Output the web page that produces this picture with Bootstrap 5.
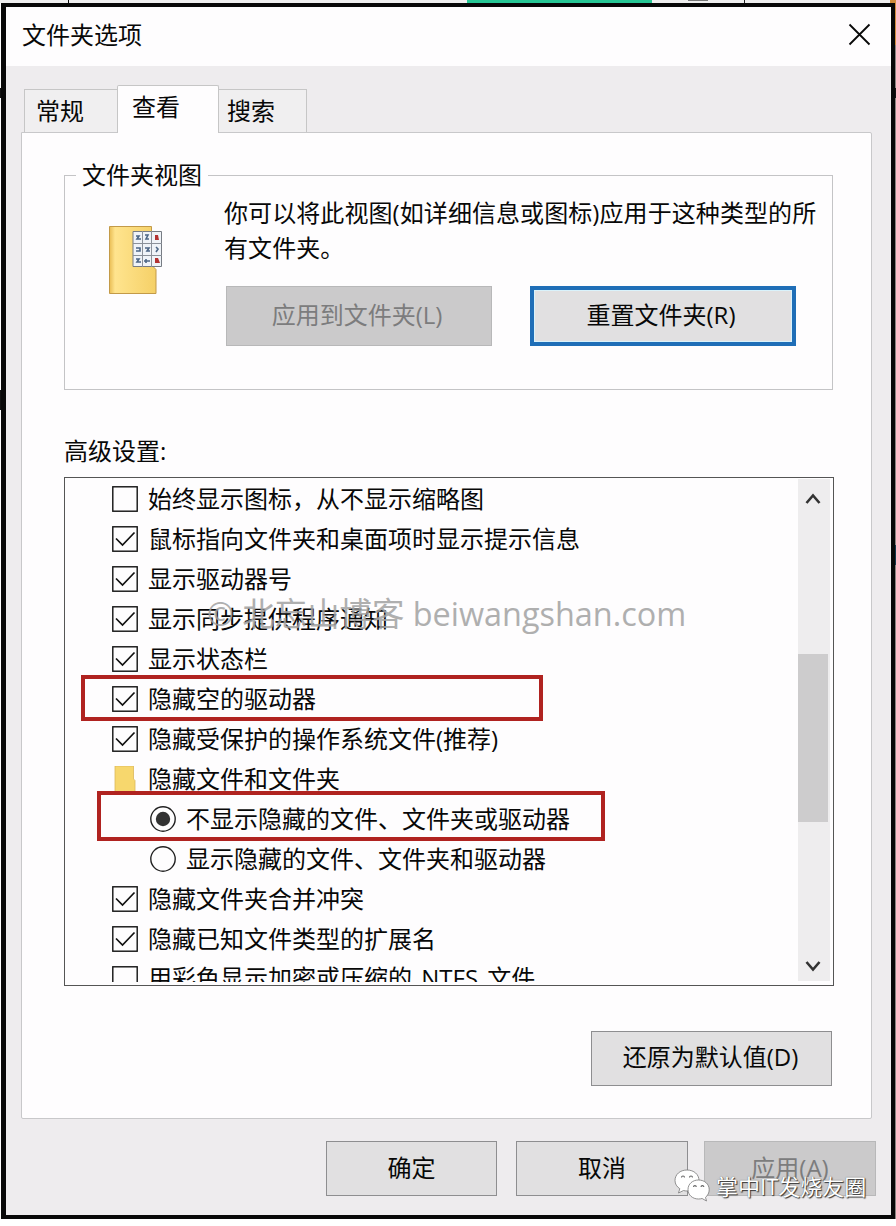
<!DOCTYPE html>
<html lang="zh-CN">
<head>
<meta charset="utf-8">
<title>文件夹选项</title>
<link href="https://cdn.jsdelivr.net/npm/bootstrap@5.3.0/dist/css/bootstrap.min.css" rel="stylesheet">
<style>
html,body{height:1226px;overflow:hidden}
body{background:#fff;color:#080808;font:24px/30px "Open Sans","Noto Sans CJK SC",sans-serif;font-weight:400}
.desk{width:896px;height:1226px;padding:3px 1px 0 1px;background:
 linear-gradient(#080808,#080808) 68px 0/1px 3px no-repeat,
 linear-gradient(#27c795,#27c795) 467px 0/185px 3px no-repeat,
 linear-gradient(#777,#777) 688px 0/20px 1px no-repeat,
 linear-gradient(#222,#222) 744px 0/1px 3px no-repeat,
 linear-gradient(#d08c3c,#d08c3c) 890px 0/6px 45px no-repeat,
 linear-gradient(#efefef,#efefef) 0 0/896px 3px no-repeat,
 linear-gradient(#111,#111) 0 88px/2px 10px no-repeat,
 linear-gradient(#111,#111) 0 390px/2px 20px no-repeat,
 linear-gradient(#111,#111) 894px 88px/2px 10px no-repeat,
 linear-gradient(#12384a,#12384a) 894px 545px/2px 20px no-repeat,
 linear-gradient(#8a8480,#8a8480) 895px 45px/1px 1174px no-repeat,
 #fff}
.win{width:894px;height:1216px;background:#eeecee;border:4px solid #080808;border-left-width:5px}
.titlebar{height:59px;background:#fefdfe;padding:0 20px 3px 16px}
.titlebar svg{margin-top:-2px}
.tabs{height:66px;padding:0 0 0 18px}
.tabs .nav-link{border:1px solid #c6c6c6;border-bottom:0;border-radius:0;color:#080808;height:43px;background:#f0eff0;padding:6px 0 0 11px;line-height:30px}
.tabs .t1{width:93px;border-right:0}.tabs .t3{width:88px;border-left:0;padding-left:8px}
.tabs .nav-link.active{width:102px;height:48px;margin-bottom:-1px;background:#fefdfe;border:1px solid #c6c6c6;border-bottom:0;border-radius:2px 2px 0 0;padding:6px 0 0 14px;color:#080808;z-index:1}
.panel{width:851px;height:987px;margin-left:15px;background:#fefdfe;border:1px solid #c8c8ca;border-radius:0 2px 2px 2px;padding:27px 38px 0 42px}
.group{height:230px;padding:0}
.group legend{font-size:24px;line-height:30px;width:auto;margin:0 0 0 12px;padding:0 6px;background:#fefdfe;float:none;position:relative;z-index:1}
.frame{border:1px solid #c4c4c6;height:215px;margin-top:-15px;padding:19px 0 0 44px}
.intro{line-height:35px;margin:0 0 21px;white-space:nowrap;letter-spacing:.08px}
.wbtn{border:1px solid #8e8e90;border-radius:0;background:#e1e0e1;color:#080808;font-size:24px;line-height:30px;padding:0 2px 3px 0;height:55px;display:flex;align-items:center;justify-content:center}
.wbtn:disabled{background:#cbcacb;border-color:#b8b8b9;color:#7c7c7d;opacity:1}
.wbtn.wide{width:266px;height:60px;padding-right:4px}
.wbtn.focused{border:4px solid #1f6eb7;box-shadow:inset 0 0 0 1px #d9f2fb}
.foot .wbtn{padding:0 0 2px}
.lab{margin:46px 0 0;line-height:30px}
.lbox{height:509px;width:770px;margin-top:11px;border:1px solid #555;padding:1px 3px 3px 0}
.rows{height:503px;overflow:hidden;padding-left:47px}
.item{height:40px;white-space:nowrap;gap:10px}
.item.sub{padding-left:38px;gap:10px}
.item:last-child span{margin-top:-3px;word-spacing:3px}
.item svg{flex:none;width:26px;height:26px}
.sbar{width:32px;background:#eeedee;padding:13px 2px 8px 0;height:502px}
.thumb{width:30px;height:168px;background:#cdcccd;margin-top:149px}
.redbox{position:absolute;border:4px solid #b02320}
.wm{position:absolute;left:207px;top:592px;font-size:32.4px;line-height:42px;color:#a2a2a2;opacity:.85;white-space:nowrap}
.wx{position:absolute;left:674px;top:1169px;color:#fff;font-size:22px;line-height:34px;text-shadow:1px 1px 1px #333,0 0 1px #555;gap:6px;white-space:nowrap}
</style>
</head>
<body>
<div class="desk position-relative">
<main class="win">
 <header class="titlebar d-flex align-items-center justify-content-between">
  <span>文件夹选项</span>
  <svg width="24" height="24" viewBox="0 0 24 24" fill="none" stroke="#080808" stroke-width="1.8"><path d="M2.500 2.500 22.500 22.500M22.500 2.500 2.500 22.500"/></svg>
 </header>
 <nav class="tabs nav align-items-end">
  <a class="nav-link t1">常规</a><a class="nav-link active">查看</a><a class="nav-link t3">搜索</a>
 </nav>
 <section class="panel">
  <fieldset class="group">
   <legend>文件夹视图</legend>
   <div class="frame d-flex">
    <svg width="56" height="70" viewBox="0 0 56 70" class="flex-shrink-0" style="margin-top:30px">
     <defs><linearGradient id="fold" x2="1"><stop offset="0" stop-color="#e9bd54"/><stop offset=".12" stop-color="#ffe48e"/><stop offset="1" stop-color="#f5d067"/></linearGradient></defs>
     <path d="M.5 1.500H42.500V40L47 44.500V68.500H.5Z" fill="url(#fold)" stroke="#c39a48"/>
     <path d="M24 6.500H52.500V41.500H24Z" fill="#eff3f8" stroke="#777c84"/>
     <path d="M33.500 6V42M42.500 6V42M24 18.500H53M24 30.500H53" stroke="#8b919a"/>
     <path d="M27 11h3l-2 3h4M36 10h3l-2 4h3M27 23h4v3h-4M36 23h4l-2 3h3M27 34h3l-2 3h4M35 36h6M37 34v4M47 22l2 2-2 3" fill="none" stroke="#4c6685" stroke-width="1.600"/>
     <path d="M46 10h3l1 5h-4zM46 33h3l2 5h-5z" fill="#b33232"/>
    </svg>
    <div style="margin-left:59px">
     <p class="intro">你可以将此视图(如详细信息或图标)应用于这种类型的所<br>有文件夹。</p>
     <div class="d-flex" style="gap:38px;margin-left:2px">
      <button class="btn wbtn wide" disabled>应用到文件夹(L)</button>
      <button class="btn wbtn wide focused">重置文件夹(R)</button>
     </div>
    </div>
   </div>
  </fieldset>
  <p class="lab">高级设置:</p>
  <div class="lbox d-flex">
   <div class="rows flex-grow-1" id="rows"></div>
   <div class="sbar d-flex flex-column align-items-center">
    <svg width="16" height="13" viewBox="0 0 16 13" fill="none" stroke="#333" stroke-width="2.600"><path d="M1.500 11 8 3.500 14.500 11"/></svg>
    <div class="thumb"></div>
    <svg class="mt-auto" width="16" height="13" viewBox="0 0 16 13" fill="none" stroke="#333" stroke-width="2.600"><path d="M1.500 2 8 9.500 14.500 2"/></svg>
   </div>
  </div>
  <div class="d-flex justify-content-end" style="padding:45px 1px 0 0"><button class="btn wbtn" style="width:241px">还原为默认值(D)</button></div>
 </section>
 <footer class="foot d-flex justify-content-end" style="padding:22px 15px 0 0">
  <button class="btn wbtn" style="width:171px">确定</button>
  <button class="btn wbtn" style="width:172px;margin:0 16px 0 19px">取消</button>
  <button class="btn wbtn" disabled style="width:172px">应用(A)</button>
 </footer>
</main>
<div class="redbox" style="left:81px;top:675px;width:462px;height:46px"></div>
<div class="redbox" style="left:97px;top:791px;width:508px;height:50px"></div>
<div class="wm">© 北忘山博客 beiwangshan.com</div>
<div class="wx d-flex align-items-center">
 <svg width="36" height="34" viewBox="0 0 36 34"><g fill="#fff" stroke="#777" stroke-width=".8"><path d="M13 1C6 1 1 5.500 1 11.500c0 3.500 1.800 6.200 4.800 8.200L4.500 24l5-2.500c1.200.3 2.300.5 3.500.5 7 0 12-4.500 12-10.500S20 1 13 1Z"/><path d="M24.500 11C18.500 11 14 15 14 20.500S18.500 30 24.500 30c1.300 0 2.500-.2 3.600-.5L32.500 32l-1-3.700c2.300-1.800 3.700-4.500 3.700-7.600C35.200 15 30.500 11 24.500 11Z"/></g><g fill="none" stroke="#666" stroke-width="1.100"><path d="M7.500 8.500a1.500 1.500 0 0 1 3 0M15.500 8.500a1.500 1.500 0 0 1 3 0M19.500 18a1.400 1.400 0 0 1 2.800 0M27 18a1.400 1.400 0 0 1 2.800 0"/></g></svg>
 <span>掌中IT发烧友圈</span>
</div>
</div>
<script>
const box='<rect x=".8" y=".8" width="24.400" height="24.400" fill="#fefdfe" stroke="#111" stroke-width="1.400"/>';
const icons={
 o:box,
 c:box+'<path d="M4 12.500 10.500 19 22.500 6.500" fill="none" stroke="#111" stroke-width="1.700"/>',
 f:'<path d="M3 0H21.500v13l1.500 1.500V26H3Z" fill="#f7d76d" stroke="#dcb75a" stroke-width=".8"/>',
 r:'<circle cx="13" cy="13" r="12.200" fill="#fefdfe" stroke="#222" stroke-width="1.400"/>',
 s:'<circle cx="13" cy="13" r="12.200" fill="#fefdfe" stroke="#222" stroke-width="1.400"/><circle cx="13" cy="13" r="7.200" fill="#333"/>'
};
const items=[['o','始终显示图标，从不显示缩略图'],['c','鼠标指向文件夹和桌面项时显示提示信息'],['c','显示驱动器号'],['c','显示同步提供程序通知'],['c','显示状态栏'],['c','隐藏空的驱动器'],['c','隐藏受保护的操作系统文件(推荐)'],['f','隐藏文件和文件夹'],['s','不显示隐藏的文件、文件夹或驱动器'],['r','显示隐藏的文件、文件夹和驱动器'],['c','隐藏文件夹合并冲突'],['c','隐藏已知文件类型的扩展名'],['o','用彩色显示加密或压缩的 NTFS 文件']];
document.getElementById('rows').innerHTML=items.map(([k,t])=>`<div class="item d-flex align-items-center${k=='r'||k=='s'?' sub':''}"><svg viewBox="0 0 26 26">${icons[k]}</svg><span>${t}</span></div>`).join('');
</script>
<script src="https://cdn.jsdelivr.net/npm/bootstrap@5.3.0/dist/js/bootstrap.bundle.min.js"></script>
</body>
</html>
